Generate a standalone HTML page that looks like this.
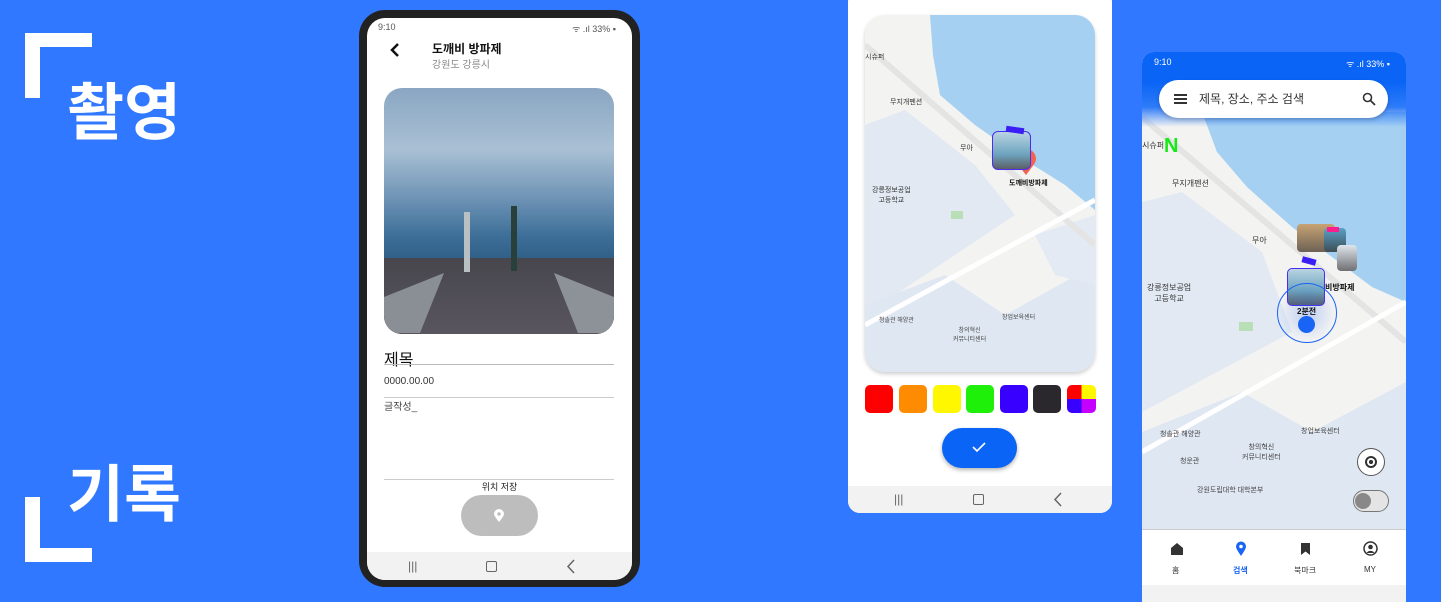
<!DOCTYPE html>
<html><head><meta charset="utf-8"><style>
*{margin:0;padding:0;box-sizing:border-box}
body{width:1441px;height:596px;background:#3078ff;position:relative;overflow:hidden;font-family:"Liberation Sans","Noto Sans CJK KR",sans-serif}
.a{position:absolute}
.big{color:#fff;font-weight:700;font-size:62px;line-height:1;font-family:"Noto Sans CJK KR",sans-serif}
</style></head><body>
<!-- brackets -->
<div class="a" style="left:25px;top:33px;width:67px;height:14px;background:#fff"></div>
<div class="a" style="left:25px;top:33px;width:15px;height:65px;background:#fff"></div>
<div class="a" style="left:25px;top:497px;width:15px;height:65px;background:#fff"></div>
<div class="a" style="left:25px;top:548px;width:67px;height:14px;background:#fff"></div>
<div class="a big" style="left:67px;top:76px">촬영</div>
<div class="a big" style="left:67px;top:458px">기록</div>

<!-- phone 1 -->
<div class="a" style="left:359px;top:10px;width:281px;height:577px;background:#222;border-radius:26px"></div>
<div class="a" style="left:367px;top:18px;width:265px;height:562px;background:#fff;border-radius:18px;overflow:hidden">
 <div class="a" style="left:11px;top:4px;font-size:9px;color:#555">9:10</div>
 <div class="a" style="right:16px;top:4px;font-size:9px;color:#555">ᯤ .ıl 33% ▪</div>
 <svg class="a" style="left:22px;top:24px" width="12" height="16"><path d="M9 2 L3 8 L9 14" stroke="#111" stroke-width="2.5" fill="none"/></svg>
 <div class="a" style="left:65px;top:22px;font-size:12px;font-weight:700;color:#111">도깨비 방파제</div>
 <div class="a" style="left:65px;top:38px;font-size:10px;color:#888">강원도 강릉시</div>
 <div class="a" style="left:17px;top:70px;width:230px;height:246px;border-radius:18px;overflow:hidden;background:linear-gradient(180deg,#8aa6c2 0%,#a9c0d4 25%,#6e93b5 45%,#3e6f98 60%,#2f5f86 70%,#3a5874 78%,#4a4a52 85%,#3a3a40 100%)">
  <div class="a" style="left:0;top:170px;width:230px;height:80px;background:linear-gradient(180deg,#47464d,#5a5660)"></div>
  <div class="a" style="left:0;top:185px;width:60px;height:60px;background:#8a8f96;clip-path:polygon(0 40%,100% 0,60% 100%,0 100%)"></div>
  <div class="a" style="left:170px;top:185px;width:60px;height:60px;background:#8d9299;clip-path:polygon(0 0,100% 40%,100% 100%,40% 100%)"></div>
  <div class="a" style="left:80px;top:124px;width:6px;height:60px;background:#b8c0c4"></div>
  <div class="a" style="left:127px;top:118px;width:6px;height:65px;background:#29403a"></div>
 </div>
 <div class="a" style="left:17px;top:328px;font-size:16px;color:#111">제목</div>
 <div class="a" style="left:17px;top:346px;width:230px;height:1px;background:#bbb"></div>
 <div class="a" style="left:17px;top:358px;font-size:10px;color:#333">0000.00.00</div>
 <div class="a" style="left:17px;top:379px;width:230px;height:1px;background:#ccc"></div>
 <div class="a" style="left:17px;top:380px;font-size:10px;color:#444">글작성_</div>
 <div class="a" style="left:17px;top:461px;width:230px;height:1px;background:#ccc"></div>
 <div class="a" style="left:0;top:462px;width:265px;text-align:center;font-size:9px;color:#222">위치 저장</div>
 <div class="a" style="left:94px;top:477px;width:77px;height:41px;border-radius:21px;background:#bdbdbd"></div>
 <svg class="a" style="left:126px;top:491px" width="12" height="14"><path d="M6 13 C2 8 1 6 1 5 A5 5 0 0 1 11 5 C11 6 10 8 6 13Z" fill="#fff"/><circle cx="6" cy="5" r="1.7" fill="#bdbdbd"/></svg>
 <div class="a" style="left:0;top:534px;width:265px;height:28px;background:#f2f2f2"></div>
 <div class="a" style="left:41px;top:541px;font-size:12px;color:#666">|||</div>
 <div class="a" style="left:119px;top:543px;width:11px;height:11px;border:1.5px solid #666;border-radius:2px"></div>
 <svg class="a" style="left:199px;top:541px" width="10" height="15"><path d="M8 1 L2 7.5 L8 14" stroke="#666" stroke-width="1.5" fill="none"/></svg>
</div>

<!-- middle panel -->
<div class="a" style="left:848px;top:-10px;width:264px;height:523px;background:#fff;border-radius:12px;overflow:hidden">
 <div class="a" style="left:17px;top:25px;width:230px;height:357px;border-radius:20px;overflow:hidden;background:#f3f3f2;box-shadow:0 2px 4px rgba(0,0,0,.2)">
  <svg class="a" style="left:0;top:0" width="230" height="357">
   <polygon points="65,0 230,0 230,195 200,170 160,145 110,110 75,80 68,40" fill="#a5d0f2"/>
   <polygon points="0,110 40,95 110,150 150,200 0,300" fill="#e2e9f3"/>
   <polygon points="0,290 80,260 140,300 230,250 230,357 0,357" fill="#dfe7f2"/>
   <polygon points="170,220 230,200 230,270 190,260" fill="#e3eaf3"/>
   <path d="M0 30 L230 230" stroke="#e4e4e4" stroke-width="6"/>
   <path d="M0 310 L230 185" stroke="#fff" stroke-width="5"/>
   <rect x="86" y="196" width="12" height="8" fill="#b9dfb7"/>
  </svg>
  <div class="a" style="left:0;top:37px;font-size:7px;color:#333">시슈퍼</div>
  <div class="a" style="left:25px;top:82px;font-size:7px;color:#333">무지개펜션</div>
  <div class="a" style="left:95px;top:128px;font-size:7px;color:#333">무아</div>
  <div class="a" style="left:7px;top:170px;font-size:7px;color:#333;text-align:center">강릉정보공업<br>고등학교</div>
  <div class="a" style="left:144px;top:163px;font-size:7px;font-weight:700;color:#111">도깨비방파제</div>
  <div class="a" style="left:14px;top:300px;font-size:6px;color:#444">청솔관 해양관</div>
  <div class="a" style="left:137px;top:297px;font-size:6px;color:#444">창업보육센터</div>
  <div class="a" style="left:88px;top:310px;font-size:6px;color:#444;text-align:center">창의혁신<br>커뮤니티센터</div>
  <svg class="a" style="left:150px;top:133px" width="22" height="28"><path d="M11 27 C4 18 1 14 1 11 A10 10 0 0 1 21 11 C21 14 18 18 11 27Z" fill="#f0634f"/></svg>
  <div class="a" style="left:127px;top:116px;width:39px;height:39px;border:1.5px solid #4b2cf0;border-radius:6px;background:linear-gradient(180deg,#b8d4e2,#6ea4bf 60%,#5b5f66)"></div>
  <div class="a" style="left:141px;top:112px;width:18px;height:6px;background:#3a1ff5;transform:rotate(8deg)"></div>
 </div>
 <div class="a" style="left:17px;top:395px;width:28px;height:28px;border-radius:5px;background:#ff0000"></div>
 <div class="a" style="left:51px;top:395px;width:28px;height:28px;border-radius:5px;background:#ff8c00"></div>
 <div class="a" style="left:85px;top:395px;width:28px;height:28px;border-radius:5px;background:#fff700"></div>
 <div class="a" style="left:118px;top:395px;width:28px;height:28px;border-radius:5px;background:#1ef00a"></div>
 <div class="a" style="left:152px;top:395px;width:28px;height:28px;border-radius:5px;background:#3700ff"></div>
 <div class="a" style="left:185px;top:395px;width:28px;height:28px;border-radius:5px;background:#2a282d"></div>
 <div class="a" style="left:219px;top:395px;width:29px;height:28px;border-radius:5px;overflow:hidden;background:conic-gradient(#fff700 0 25%,#c400ff 25% 50%,#3700ff 50% 75%,#ff0000 75%)"></div>
 <div class="a" style="left:94px;top:438px;width:75px;height:40px;border-radius:20px;background:#0a64f5;box-shadow:0 2px 4px rgba(0,0,0,.3)"></div>
 <svg class="a" style="left:124px;top:451px" width="14" height="12"><path d="M1 6 L5 10 L13 2" stroke="#fff" stroke-width="1.6" fill="none"/></svg>
 <div class="a" style="left:0;top:496px;width:264px;height:27px;background:#f2f2f2"></div>
 <div class="a" style="left:46px;top:502px;font-size:12px;color:#666">|||</div>
 <div class="a" style="left:125px;top:504px;width:11px;height:11px;border:1.5px solid #666;border-radius:2px"></div>
 <svg class="a" style="left:205px;top:502px" width="10" height="15"><path d="M8 1 L2 7.5 L8 14" stroke="#666" stroke-width="1.5" fill="none"/></svg>
</div>

<!-- right phone -->
<div class="a" style="left:1142px;top:52px;width:264px;height:550px;background:#f3f3f2;border-radius:12px 12px 0 0;overflow:hidden">
 <svg class="a" style="left:0;top:0" width="264" height="480">
  <polygon points="60,60 264,60 264,250 230,235 190,205 150,175 105,135 75,100" fill="#a5d0f2"/>
  <polygon points="0,150 40,140 120,200 150,280 0,360" fill="#e2e9f3"/>
  <polygon points="0,380 100,340 170,380 264,330 264,480 0,480" fill="#dfe7f2"/>
  <path d="M0 65 L264 290" stroke="#e4e4e4" stroke-width="6"/>
  <path d="M0 400 L264 250" stroke="#fff" stroke-width="5"/>
  <rect x="97" y="270" width="14" height="9" fill="#b9dfb7"/>
 </svg>
 <div class="a" style="left:0;top:0;width:264px;height:75px;background:linear-gradient(180deg,#0a64f5 0,#0a64f5 30px,#2d7bf8 55px,rgba(50,120,250,0) 75px)"></div>
 <div class="a" style="left:12px;top:5px;font-size:9px;color:#fff">9:10</div>
 <div class="a" style="right:16px;top:5px;font-size:9px;color:#fff">ᯤ .ıl 33% ▪</div>
 <div class="a" style="left:17px;top:28px;width:229px;height:38px;border-radius:19px;background:#fff;box-shadow:0 2px 4px rgba(0,0,0,.2)"></div>
 <div class="a" style="left:32px;top:42px;width:13px;height:2px;background:#333;box-shadow:0 4px 0 #333,0 8px 0 #333"></div>
 <div class="a" style="left:57px;top:38px;font-size:12px;color:#333">제목, 장소, 주소 검색</div>
 <svg class="a" style="left:220px;top:40px" width="14" height="14"><circle cx="5.5" cy="5.5" r="4" stroke="#333" stroke-width="1.6" fill="none"/><path d="M8.5 8.5 L13 13" stroke="#333" stroke-width="1.8"/></svg>
 <div class="a" style="left:22px;top:83px;font-size:20px;font-weight:900;color:#18e818">N</div>
 <div class="a" style="left:0;top:88px;font-size:8px;color:#333">시슈퍼</div>
 <div class="a" style="left:30px;top:126px;font-size:8px;color:#333">무지개펜션</div>
 <div class="a" style="left:110px;top:183px;font-size:8px;color:#333">무아</div>
 <div class="a" style="left:5px;top:230px;font-size:8px;color:#333;text-align:center">강릉정보공업<br>고등학교</div>
 <div class="a" style="left:183px;top:230px;font-size:8px;font-weight:700;color:#111">비방파제</div>
 <div class="a" style="left:155px;top:172px;width:38px;height:28px;border-radius:4px;background:linear-gradient(#c7a373,#6d6155)"></div>
 <div class="a" style="left:182px;top:176px;width:22px;height:24px;border-radius:4px;background:linear-gradient(#5aa0c8,#3d4d55)"></div>
 <div class="a" style="left:185px;top:175px;width:12px;height:5px;background:#ff1d8e"></div>
 <div class="a" style="left:195px;top:193px;width:20px;height:26px;border-radius:4px;background:linear-gradient(#dfe6ec,#706f72)"></div>
 <div class="a" style="left:145px;top:216px;width:38px;height:38px;border:1.5px solid #4b2cf0;border-radius:5px;background:linear-gradient(180deg,#b8d4e2,#6ea4bf 60%,#5b5f66)"></div>
 <div class="a" style="left:160px;top:206px;width:14px;height:6px;background:#3a1ff5;transform:rotate(15deg)"></div>
 <div class="a" style="left:135px;top:231px;width:60px;height:60px;border-radius:50%;border:1px solid #1a64f5;background:radial-gradient(circle,rgba(30,100,245,.25),rgba(30,100,245,0) 70%)"></div>
 <div class="a" style="left:156px;top:264px;width:17px;height:17px;border-radius:50%;background:#1a64f5"></div>
 <div class="a" style="left:155px;top:254px;font-size:8px;font-weight:700;color:#111">2분전</div>
 <div class="a" style="left:18px;top:377px;font-size:7px;color:#444">청솔관 해양관</div>
 <div class="a" style="left:159px;top:374px;font-size:7px;color:#444">창업보육센터</div>
 <div class="a" style="left:100px;top:390px;font-size:7px;color:#444;text-align:center">창의혁신<br>커뮤니티센터</div>
 <div class="a" style="left:38px;top:404px;font-size:7px;color:#444">청운관</div>
 <div class="a" style="left:55px;top:433px;font-size:7px;color:#444">강원도립대학 대학본부</div>
 <div class="a" style="left:215px;top:396px;width:28px;height:28px;border-radius:50%;background:#fff;border:1px solid #555"></div>
 <div class="a" style="left:223px;top:404px;width:12px;height:12px;border-radius:50%;border:2px solid #333;background:radial-gradient(#333 35%,#fff 40%)"></div>
 <div class="a" style="left:211px;top:438px;width:36px;height:22px;border-radius:11px;background:#e4e4e4;border:1.5px solid #777"></div>
 <div class="a" style="left:213px;top:441px;width:16px;height:16px;border-radius:50%;background:#888"></div>
 <div class="a" style="left:0;top:477px;width:264px;height:56px;background:#fff;border-top:1px solid #ccc"></div>
 <svg class="a" style="left:28px;top:490px" width="14" height="14"><path d="M1 6 L7 1 L13 6 V13 H1Z" fill="#333"/></svg>
 <div class="a" style="left:30px;top:513px;font-size:8px;color:#333">홈</div>
 <svg class="a" style="left:93px;top:489px" width="12" height="16"><path d="M6 15 C2 9 1 7 1 5.5 A5 5 0 0 1 11 5.5 C11 7 10 9 6 15Z" fill="#1a64f5"/><circle cx="6" cy="5.5" r="1.8" fill="#fff"/></svg>
 <div class="a" style="left:91px;top:513px;font-size:8px;color:#1a64f5;font-weight:700">검색</div>
 <svg class="a" style="left:158px;top:490px" width="11" height="14"><path d="M1 1 H10 V13 L5.5 9.5 L1 13Z" fill="#333"/></svg>
 <div class="a" style="left:152px;top:513px;font-size:8px;color:#333">북마크</div>
 <svg class="a" style="left:221px;top:489px" width="15" height="15"><circle cx="7.5" cy="7.5" r="6.5" stroke="#333" stroke-width="1.5" fill="none"/><circle cx="7.5" cy="6" r="2.3" fill="#333"/><path d="M3.5 12 A4.5 4 0 0 1 11.5 12" fill="#333"/></svg>
 <div class="a" style="left:222px;top:513px;font-size:8px;color:#333">MY</div>
 <div class="a" style="left:0;top:533px;width:264px;height:20px;background:#f2f2f2"></div>
</div>
</body></html>
